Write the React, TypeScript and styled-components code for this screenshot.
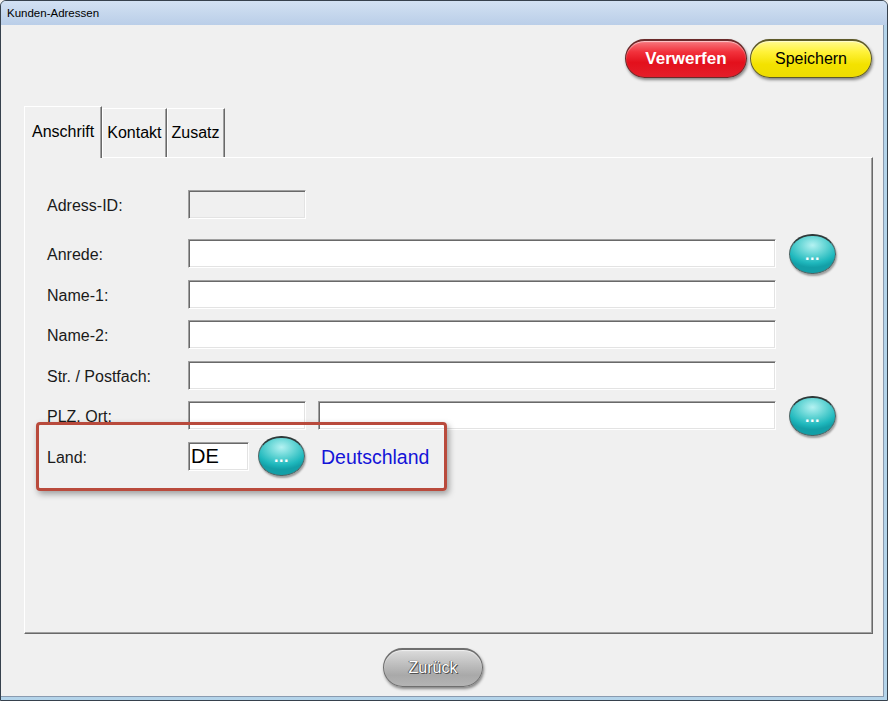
import React from 'react';
import styled, { createGlobalStyle } from 'styled-components';

const GlobalStyle = createGlobalStyle`
  html, body {
    margin: 0;
    padding: 0;
    background: #f0f0f0;
  }
  body {
    font-family: 'Liberation Sans', Arial, sans-serif;
  }
`;

const Window = styled.div`
  width: 888px;
  height: 701px;
  box-sizing: border-box;
  display: flex;
  flex-direction: column;
  border: 1px solid #36414d;
  border-radius: 6px 6px 0 0;
  background: #b4d4ea;
  overflow: hidden;
`;

const TitleBar = styled.div`
  height: 24px;
  line-height: 24px;
  padding-left: 6px;
  font-size: 11.5px;
  color: #000;
  background: linear-gradient(#d2e1f3, #bacee8);
`;

const Body = styled.div`
  flex: 1;
  display: flex;
  flex-direction: column;
  background: #f0f0f0;
  margin: 0 3px 3px 0;
  border-right: 1px solid #8a9bb0;
  border-bottom: 1px solid #8a9bb0;
`;

const TopBar = styled.div`
  display: flex;
  justify-content: flex-end;
  gap: 3px;
  padding: 14px 11px 0 0;
`;

const PillButton = styled.button<{ $tone: 'red' | 'yellow' | 'grey' }>`
  box-sizing: border-box;
  width: ${(p) => (p.$tone === 'grey' ? 100 : 122)}px;
  height: 39px;
  border-radius: 20px;
  font-family: 'Liberation Sans', Arial, sans-serif;
  font-size: ${(p) => (p.$tone === 'red' ? 17 : 16)}px;
  font-weight: ${(p) => (p.$tone === 'red' ? 'bold' : 'normal')};
  cursor: pointer;
  padding: 0;
  border: 1px solid #4a4a4a;
  border-top: 2px solid #3a3a3a;
  box-shadow: inset 0 1px 1px rgba(255, 255, 255, 0.6), 1px 2px 3px rgba(0, 0, 0, 0.45);
  ${(p) =>
    p.$tone === 'red'
      ? `
    color: #fff;
    background: linear-gradient(#f77a80 0%, #f2323c 30%, #e3101c 60%, #e41e2a 100%);
    border-color: #6a2a2a;
  `
      : p.$tone === 'yellow'
      ? `
    color: #000;
    background: linear-gradient(#fffa90 0%, #fff23a 30%, #f3e200 65%, #eedc00 100%);
    border-color: #5e5a2a;
  `
      : `
    color: #fff;
    text-shadow: 0 0 1px #333, 1px 1px 0 #555, -1px 0 0 #777;
    background: linear-gradient(#dcdcdc 0%, #c2c2c2 35%, #a9a9a9 70%, #b4b4b4 100%);
    border-color: #6f6f6f;
  `}
`;

const TabArea = styled.div`
  display: flex;
  flex-direction: column;
  margin: 28px 10px 0 23px;
`;

const TabStrip = styled.div`
  display: flex;
  align-items: flex-end;
  height: 51px;
`;

const Tab = styled.div<{ $active?: boolean }>`
  box-sizing: border-box;
  height: ${(p) => (p.$active ? 52 : 49)}px;
  display: flex;
  align-items: center;
  padding: 0 ${(p) => (p.$active ? 7 : 4)}px ${(p) => (p.$active ? 1 : 0)}px;
  font-size: 16px;
  color: #000;
  background: #f0f0f0;
  border-top: 1px solid #fff;
  border-left: 1px solid #fff;
  border-right: 1px solid #696969;
  box-shadow: inset -1px 0 0 #a0a0a0;
  margin-bottom: ${(p) => (p.$active ? -1 : 0)}px;
  position: relative;
  z-index: ${(p) => (p.$active ? 2 : 1)};
`;

const Panel = styled.div`
  box-sizing: border-box;
  position: relative;
  height: 477px;
  padding: 32px 0 0 22px;
  border: 1px solid;
  border-color: #fff #696969 #696969 #fff;
  box-shadow: inset -1px -1px 0 #a0a0a0;
`;

const FieldList = styled.div`
  display: flex;
  flex-direction: column;
  gap: 11.5px;
`;

const Row = styled.div<{ $spaced?: boolean }>`
  display: flex;
  align-items: center;
  height: 29px;
  margin-bottom: ${(p) => (p.$spaced ? 8.5 : 0)}px;
`;

const Label = styled.div`
  width: 141px;
  flex-shrink: 0;
  font-size: 16px;
  color: #1a1a1a;
  padding-top: 3px;
`;

const Field = styled.input<{ $w: number; $gap?: number; $disabled?: boolean }>`
  box-sizing: border-box;
  width: ${(p) => p.$w}px;
  height: 29px;
  margin: 0 0 0 ${(p) => p.$gap ?? 0}px;
  padding: 1px 2px 0;
  font-family: 'Liberation Sans', Arial, sans-serif;
  font-size: 20px;
  color: #000;
  background: ${(p) => (p.$disabled ? '#f0f0f0' : '#fff')};
  border: 1px solid;
  border-color: #a0a0a0 #fff #fff #a0a0a0;
  box-shadow: inset 1px 1px 0 #696969, inset -1px -1px 0 #e3e3e3;
  outline: none;
`;

const DotButton = styled.button<{ $gap: number }>`
  box-sizing: border-box;
  width: 47px;
  height: 40px;
  margin-left: ${(p) => p.$gap}px;
  padding: 0;
  border-radius: 23px / 20px;
  border: 1px solid #4f6666;
  border-top: 2px solid #2f3a3a;
  background: radial-gradient(ellipse 70% 60% at 50% 25%, #b4f2f2 0%, #5fd3d3 45%, #1fb8bd 80%, #139fa7 100%);
  box-shadow: 1px 2px 2px rgba(0, 0, 0, 0.35);
  color: #fff;
  font-family: 'Liberation Sans', Arial, sans-serif;
  font-weight: bold;
  font-size: 16px;
  line-height: 38px;
  letter-spacing: 0.5px;
  cursor: pointer;
`;

const CountryName = styled.div`
  margin-left: 16px;
  font-size: 19.5px;
  color: #1414d8;
  padding-top: 2px;
`;

const Highlight = styled.div`
  position: absolute;
  left: 11px;
  top: 264px;
  width: 411px;
  height: 69px;
  box-sizing: border-box;
  border: 3px solid #b94a3c;
  border-radius: 4px;
  box-shadow: 2px 3px 6px rgba(0, 0, 0, 0.35);
  pointer-events: none;
`;

const Footer = styled.div`
  display: flex;
  padding: 14px 0 0 382px;
`;

const WIDE = 588;

function App() {
  return (
    <>
      <GlobalStyle />
      <Window>
        <TitleBar>Kunden-Adressen</TitleBar>
        <Body>
          <TopBar>
            <PillButton $tone="red">Verwerfen</PillButton>
            <PillButton $tone="yellow">Speichern</PillButton>
          </TopBar>
          <TabArea>
            <TabStrip>
              <Tab $active>Anschrift</Tab>
              <Tab>Kontakt</Tab>
              <Tab>Zusatz</Tab>
            </TabStrip>
            <Panel>
              <FieldList>
                <Row $spaced>
                  <Label>Adress-ID:</Label>
                  <Field $w={118} $disabled readOnly defaultValue="" />
                </Row>
                <Row>
                  <Label>Anrede:</Label>
                  <Field $w={WIDE} readOnly defaultValue="" />
                  <DotButton $gap={13}>...</DotButton>
                </Row>
                <Row>
                  <Label>Name-1:</Label>
                  <Field $w={WIDE} readOnly defaultValue="" />
                </Row>
                <Row>
                  <Label>Name-2:</Label>
                  <Field $w={WIDE} readOnly defaultValue="" />
                </Row>
                <Row>
                  <Label>Str. / Postfach:</Label>
                  <Field $w={WIDE} readOnly defaultValue="" />
                </Row>
                <Row>
                  <Label>PLZ, Ort:</Label>
                  <Field $w={118} readOnly defaultValue="" />
                  <Field $w={458} $gap={12} readOnly defaultValue="" />
                  <DotButton $gap={13}>...</DotButton>
                </Row>
                <Row>
                  <Label>Land:</Label>
                  <Field $w={61} readOnly defaultValue="DE" />
                  <DotButton $gap={9}>...</DotButton>
                  <CountryName>Deutschland</CountryName>
                </Row>
              </FieldList>
              <Highlight />
            </Panel>
          </TabArea>
          <Footer>
            <PillButton $tone="grey">Zurück</PillButton>
          </Footer>
        </Body>
      </Window>
    </>
  );
}

export default App;
